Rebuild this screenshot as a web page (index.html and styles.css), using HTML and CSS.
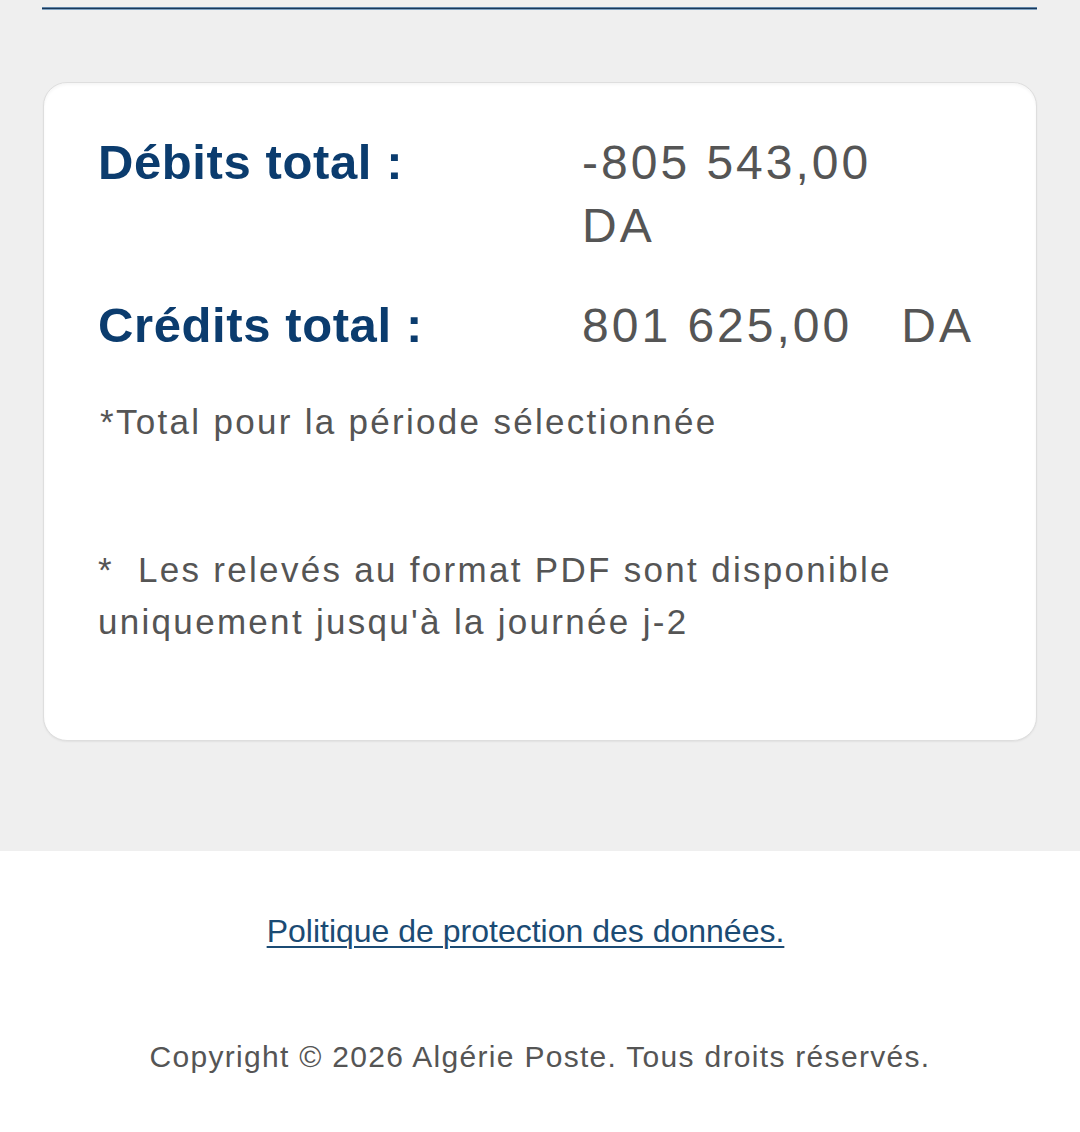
FILE: index.html
```html
<!DOCTYPE html>
<html lang="fr">
<head>
<meta charset="utf-8">
<title>Relevé</title>
<link rel="stylesheet" href="styles.css">
</head>
<body>
<main class="page">
  <div class="rule"></div>
  <section class="card">
    <div class="totals">
      <div class="label">Débits total :</div>
      <div class="value">-805 543,00&nbsp;&nbsp; DA</div>
      <div class="label">Crédits total :</div>
      <div class="value">801 625,00&nbsp;&nbsp; DA</div>
    </div>
    <p class="note note-period">*Total pour la période sélectionnée</p>
    <p class="note note-pdf">* &nbsp;Les relevés au format PDF sont disponible uniquement jusqu'à la journée j-2</p>
  </section>
</main>
<footer class="footer">
  <div class="footer-link"><a href="#">Politique de protection des données.</a></div>
  <div class="copyright">Copyright © 2026 Algérie Poste. Tous droits réservés.</div>
</footer>
</body>
</html>
```

FILE: styles.css
```css
html, body {
  margin: 0;
  padding: 0;
}
body {
  background: #efefef;
  font-family: "Liberation Sans", Arial, sans-serif;
  color: #555555;
}
.page {
  padding: 7px 43px 110px 42px;
}
.rule {
  height: 3px;
  background: linear-gradient(#5d82a6 0, #5d82a6 1px, #1a3858 1px, #1a3858 2px, #7fa2c2 2px);
}
.card {
  margin-top: 72px;
  margin-left: 1px;
  background: #ffffff;
  border: 1px solid #dedede;
  border-radius: 24px;
  box-shadow: 0 1px 2px rgba(0, 0, 0, 0.06), inset 0 2px 3px rgba(0, 0, 0, 0.04);
  padding: 48px 51px 92px 54px;
}
.totals {
  display: grid;
  grid-template-columns: 484px 1fr;
  row-gap: 37px;
}
.label {
  font-weight: bold;
  font-size: 49px;
  line-height: 63px;
  letter-spacing: 0.6px;
  color: #0b3c6e;
}
.value {
  font-size: 48px;
  line-height: 63px;
  letter-spacing: 3px;
  color: #555555;
}
.note {
  margin: 0;
  font-size: 35px;
  line-height: 52px;
  letter-spacing: 2.3px;
  color: #555555;
  padding-left: 2px;
}
.note-period {
  margin-top: 39px;
}
.note-pdf {
  margin-top: 96px;
  padding-left: 0;
}
.footer {
  background: #ffffff;
  padding: 60px 0 55px;
  text-align: center;
}
.footer-link {
  padding-right: 29px;
  font-size: 32px;
  line-height: 40px;
}
.footer-link a {
  color: #1b4b74;
  text-decoration: underline;
  text-decoration-thickness: 2px;
  text-underline-offset: 4px;
}
.copyright {
  margin-top: 86px;
  font-size: 30px;
  line-height: 40px;
  letter-spacing: 1.3px;
  color: #555555;
}
```
